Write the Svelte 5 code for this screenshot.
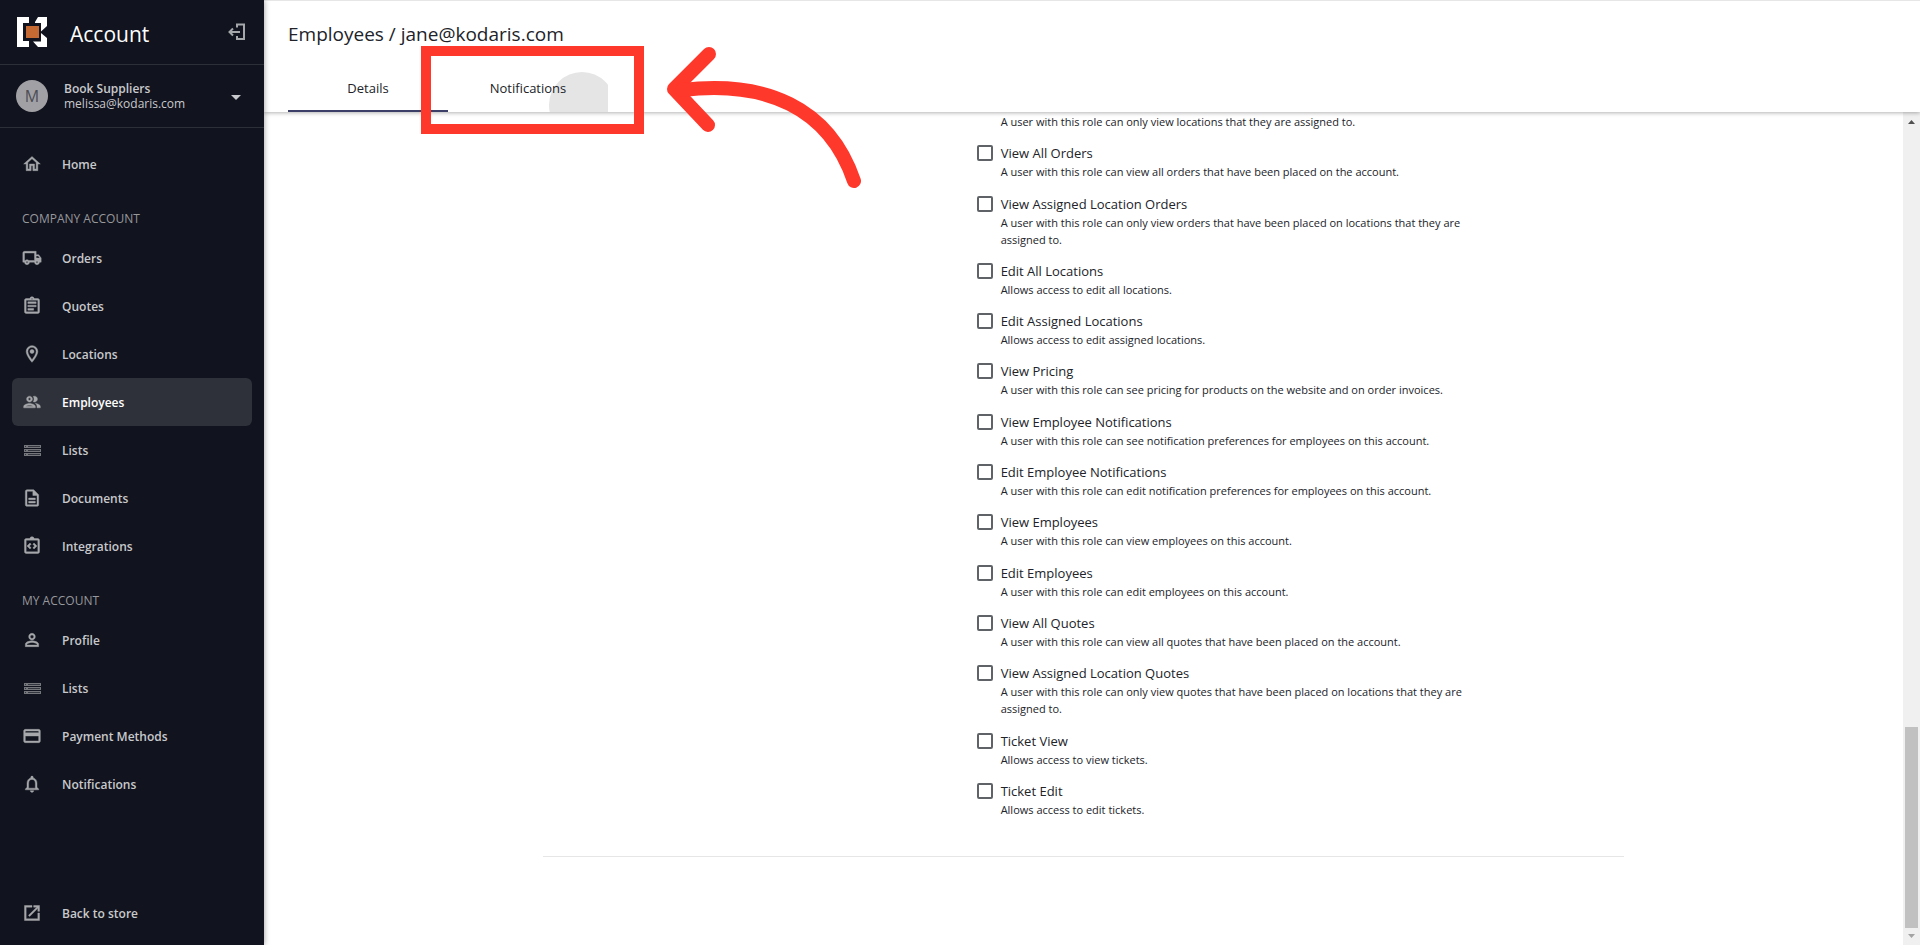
<script>
  const icons = {
    home: 'M12 5.69l5 4.5V18h-2v-6H9v6H7v-7.81l5-4.5M12 3L2 12h3v8h6v-6h2v6h6v-8h3L12 3z',
    truck:
      'M20 8h-3V4H3c-1.1 0-2 .9-2 2v11h2c0 1.66 1.34 3 3 3s3-1.34 3-3h6c0 1.66 1.34 3 3 3s3-1.34 3-3h2v-5l-3-4zm-.5 1.5l1.96 2.5H17V9.5h2.5zM6 18c-.55 0-1-.45-1-1s.45-1 1-1 1 .45 1 1-.45 1-1 1zm2.22-3c-.55-.61-1.33-1-2.22-1s-1.67.39-2.22 1H3V6h12v9H8.22zM18 18c-.55 0-1-.45-1-1s.45-1 1-1 1 .45 1 1-.45 1-1 1z',
    clipboard:
      'M7 15h7v2H7zm0-4h10v2H7zm0-4h10v2H7zm12-4h-4.18C14.4 1.84 13.3 1 12 1c-1.3 0-2.4.84-2.82 2H5c-1.1 0-2 .9-2 2v14c0 1.1.9 2 2 2h14c1.1 0 2-.9 2-2V5c0-1.1-.9-2-2-2zm-7-.25c.41 0 .75.34.75.75s-.34.75-.75.75-.75-.34-.75-.75.34-.75.75-.75zM19 19H5V5h14v14z',
    pin: 'M12 2C8.13 2 5 5.13 5 9c0 5.25 7 13 7 13s7-7.75 7-13c0-3.87-3.13-7-7-7zM7 9c0-2.76 2.24-5 5-5s5 2.24 5 5c0 2.88-2.88 7.19-5 9.88C9.92 16.21 7 11.85 7 9zM12 6.5a2.5 2.5 0 100 5 2.5 2.5 0 000-5z',
    people:
      'M9 13.75c-2.34 0-7 1.17-7 3.5V19h14v-1.75c0-2.33-4.66-3.5-7-3.5zM4.34 17c.84-.58 2.87-1.25 4.66-1.25s3.82.67 4.66 1.25H4.34zM9 12c1.93 0 3.5-1.57 3.5-3.5S10.93 5 9 5 5.5 6.57 5.5 8.5 7.07 12 9 12zm0-5c.83 0 1.5.67 1.5 1.5S9.83 10 9 10s-1.5-.67-1.5-1.5S8.17 7 9 7zm7.04 6.81c1.16.84 1.96 1.96 1.96 3.44V19h4v-1.75c0-2.02-3.5-3.17-5.96-3.44zM15 12c1.93 0 3.5-1.57 3.5-3.5S16.93 5 15 5c-.54 0-1.04.13-1.5.35.63.89 1 1.98 1 3.15s-.37 2.26-1 3.15c.46.22.96.35 1.5.35z',
    doc: 'M8 16h8v2H8zm0-4h8v2H8zm6-10H6c-1.1 0-2 .9-2 2v16c0 1.1.89 2 1.99 2H18c1.1 0 2-.9 2-2V8l-6-6zm4 18H6V4h7v5h5v11z',
    code: 'M19 3h-4.18C14.4 1.84 13.3 1 12 1s-2.4.84-2.82 2H5c-1.1 0-2 .9-2 2v14c0 1.1.9 2 2 2h14c1.1 0 2-.9 2-2V5c0-1.1-.9-2-2-2zm0 16H5V5h14v14zM11 14.17L8.83 12 11 9.83 9.59 8.41 6 12l3.59 3.59zM14.41 15.59L18 12l-3.59-3.59L13 9.83 15.17 12 13 14.17z',
    person:
      'M12 5.9c1.16 0 2.1.94 2.1 2.1s-.94 2.1-2.1 2.1S9.9 9.16 9.9 8s.94-2.1 2.1-2.1m0 9c2.97 0 6.1 1.46 6.1 2.1v1.1H5.9V17c0-.64 3.13-2.1 6.1-2.1M12 4C9.79 4 8 5.79 8 8s1.79 4 4 4 4-1.79 4-4-1.79-4-4-4zm0 9c-2.67 0-8 1.34-8 4v3h16v-3c0-2.66-5.33-4-8-4z',
    card: 'M20 4H4c-1.11 0-1.99.89-1.99 2L2 18c0 1.11.89 2 2 2h16c1.11 0 2-.89 2-2V6c0-1.11-.89-2-2-2zm0 14H4v-6h16v6zm0-10H4V6h16v2z',
    bell: 'M12 22c1.1 0 2-.9 2-2h-4c0 1.1.9 2 2 2zm6-6v-5c0-3.07-1.63-5.64-4.5-6.32V4c0-.83-.67-1.5-1.5-1.5s-1.5.67-1.5 1.5v.68C7.64 5.36 6 7.92 6 11v5l-2 2v1h16v-1l-2-2zm-2 1H8v-6c0-2.48 1.51-4.5 4-4.5s4 2.02 4 4.5v6z',
    open: 'M19 19H5V5h7V3H3v18h18v-9h-2v7zM14 3v2h3.59l-9.83 9.83 1.41 1.41L19 6.41V10h2V3h-7z'
  };

  const company = [
    ['Orders', 'truck'],
    ['Quotes', 'clipboard'],
    ['Locations', 'pin'],
    ['Employees', 'people'],
    ['Lists', 'lists'],
    ['Documents', 'doc'],
    ['Integrations', 'code']
  ];
  const personal = [
    ['Profile', 'person'],
    ['Lists', 'lists'],
    ['Payment Methods', 'card'],
    ['Notifications', 'bell']
  ];

  const roles = [
    ['View All Orders', 'A user with this role can view all orders that have been placed on the account.'],
    ['View Assigned Location Orders', 'A user with this role can only view orders that have been placed on locations that they are assigned to.'],
    ['Edit All Locations', 'Allows access to edit all locations.'],
    ['Edit Assigned Locations', 'Allows access to edit assigned locations.'],
    ['View Pricing', 'A user with this role can see pricing for products on the website and on order invoices.'],
    ['View Employee Notifications', 'A user with this role can see notification preferences for employees on this account.'],
    ['Edit Employee Notifications', 'A user with this role can edit notification preferences for employees on this account.'],
    ['View Employees', 'A user with this role can view employees on this account.'],
    ['Edit Employees', 'A user with this role can edit employees on this account.'],
    ['View All Quotes', 'A user with this role can view all quotes that have been placed on the account.'],
    ['View Assigned Location Quotes', 'A user with this role can only view quotes that have been placed on locations that they are assigned to.'],
    ['Ticket View', 'Allows access to view tickets.'],
    ['Ticket Edit', 'Allows access to edit tickets.']
  ];
</script>

{#snippet navItem(label, icon)}
  <a class="item" class:active={label === 'Employees'} href="#{icon}">
    {#if icon === 'lists'}
      <svg class="thin" viewBox="0 0 20 20" aria-hidden="true">
        {#each [5, 9, 13] as y}
          <path fill="#74767c" d="M2 {y}h17v3H2z" />
          <path fill="#34363f" d="M3 {y + 1}h1v1H3zM6 {y + 1}h12v1H6z" />
        {/each}
      </svg>
    {:else}
      <svg viewBox="0 0 24 24" aria-hidden="true"><path d={icons[icon]} /></svg>
    {/if}
    <span>{label}</span>
  </a>
{/snippet}

<div class="app">
  <aside>
    <div class="brand">
      <svg class="logo" viewBox="0 0 30 30" aria-hidden="true">
        <path fill="#fff" d="M0 0h12v6H6v18h6v6H0zM21 0h9v9l-6 5.500V6h-6v-1zM24 16l6 5v9h-9l-5-5.500h8z" />
        <path fill="#c66a33" d="M9 9h13v12H9z" />
      </svg>
      <h1>Account</h1>
      <button class="plain exit" aria-label="Collapse">
        <svg viewBox="0 0 18 18" aria-hidden="true">
          <path fill="none" stroke="currentColor" stroke-width="2" d="M9 4.500V1.500h7V16H9v-3" />
          <path fill="none" stroke="currentColor" stroke-width="2" d="M1.500 9H12M5 5.500L1.500 9L5 12.500" />
        </svg>
      </button>
    </div>
    <button class="plain user">
      <span class="avatar">M</span>
      <span class="who"><b>Book Suppliers</b><span>melissa@kodaris.com</span></span>
      <svg class="caret" viewBox="0 0 10 7" aria-hidden="true"><path d="M0 2h10L5 7z" /></svg>
    </button>
    <nav>
      {@render navItem('Home', 'home')}
      <h2>COMPANY ACCOUNT</h2>
      {#each company as [label, icon]}
        {@render navItem(label, icon)}
      {/each}
      <h2>MY ACCOUNT</h2>
      {#each personal as [label, icon]}
        {@render navItem(label, icon)}
      {/each}
      <div class="spacer"></div>
      {@render navItem('Back to store', 'open')}
    </nav>
  </aside>

  <main>
    <header>
      <div class="crumb">Employees / jane@kodaris.com</div>
      <div class="tabs" role="tablist">
        <button class="plain tab selected" role="tab" aria-selected="true">Details</button>
        <button class="plain tab" role="tab" aria-selected="false"><i class="ripple"></i><span>Notifications</span></button>
      </div>
    </header>
    <div class="body">
      <section>
        <div class="list">
          <p class="desc">A user with this role can only view locations that they are assigned to.</p>
          {#each roles as [name, text], i}
            <div class="role">
              <input type="checkbox" id="role-{i}" aria-describedby="desc-{i}" />
              <label for="role-{i}">{name}</label>
              <p class="desc" id="desc-{i}">{text}</p>
            </div>
          {/each}
        </div>
        <hr />
      </section>
      <div class="scrollbar" aria-hidden="true">
        <svg viewBox="0 0 17 17"><path fill="#505050" d="M5 12h7L8.500 8z" /></svg>
        <div class="thumb"></div>
        <svg viewBox="0 0 17 17"><path fill="#a3a3a3" d="M5 6h7L8.500 10z" /></svg>
      </div>
    </div>
  </main>

  <svg class="callout" viewBox="0 0 445 150" aria-hidden="true">
    <g fill="none" stroke="#ff382c">
      <path stroke-width="10" d="M6 11h213v78H6z" />
      <g stroke-width="14" stroke-linecap="round" stroke-linejoin="round">
        <path d="M289 14L254 49L288 85" />
        <path d="M262 50C345 40 409 67 434 141" />
      </g>
    </g>
  </svg>
</div>

<style>
  :global(body) {
    margin: 0;
    background: #fff;
  }
  .app {
    position: relative;
    display: flex;
    height: 100vh;
    overflow: hidden;
    font-family: 'Open Sans', 'Noto Sans', sans-serif;
    font-size: 13px;
    color: #212329;
  }
  h1,
  h2,
  p {
    margin: 0;
    font-weight: 400;
  }
  .plain {
    padding: 0;
    border: 0;
    background: none;
    font: inherit;
    color: inherit;
    cursor: pointer;
  }
  aside {
    z-index: 2;
    display: flex;
    flex-direction: column;
    flex: 0 0 264px;
    background: #11131e;
    color: #c8c9cc;
    box-shadow: 0 0 6px rgba(0, 0, 0, 0.4);
  }
  .brand {
    display: flex;
    align-items: center;
    height: 64px;
    padding: 0 18px 0 17px;
    border-bottom: 1px solid #2c2e38;
  }
  .logo {
    width: 30px;
    height: 30px;
  }
  h1 {
    flex: 1;
    padding: 3px 0 0 23px;
    font-size: 21px;
    line-height: 28px;
    color: #fff;
  }
  .exit {
    width: 18px;
    height: 18px;
    color: #a6a7ab;
  }
  .exit svg {
    display: block;
  }
  .plain.user {
    display: flex;
    align-items: center;
    height: 63px;
    padding: 0 23px 0 16px;
    border-bottom: 1px solid #2c2e38;
    text-align: left;
  }
  .avatar {
    width: 32px;
    border-radius: 50%;
    background: #a1a1a5;
    font-size: 16px;
    line-height: 32px;
    text-align: center;
    color: #4c4d55;
  }
  .who {
    flex: 1;
    padding-left: 16px;
    font-size: 12px;
    line-height: 15px;
  }
  .who b,
  .who span {
    display: block;
  }
  b {
    font-weight: 600;
  }
  .caret {
    width: 10px;
    height: 7px;
    fill: #c8c9cc;
  }
  nav {
    display: flex;
    flex: 1;
    flex-direction: column;
    padding: 12px 12px 8px;
  }
  .item {
    display: flex;
    align-items: center;
    gap: 20px;
    height: 48px;
    padding: 0 10px;
    border-radius: 6px;
    font-size: 12px;
    font-weight: 600;
    color: #c8c9cc;
    text-decoration: none;
  }
  .item svg {
    width: 20px;
    height: 20px;
    fill: #a6a7ab;
    stroke: #a6a7ab;
    stroke-width: 0.5;
  }
  .item .thin {
    stroke: none;
  }
  .active {
    background: #2f313a;
    color: #fff;
  }
  h2 {
    padding: 23px 10px 7px;
    font-size: 12px;
    line-height: 16px;
    color: #97989c;
  }
  .spacer {
    flex: 1;
  }
  main {
    display: flex;
    flex: 1;
    flex-direction: column;
    min-width: 0;
  }
  header {
    z-index: 1;
    padding-left: 24px;
    border-top: 1px solid #e6e6e6;
    background: #fff;
    box-shadow: 0 1px 4px rgba(0, 0, 0, 0.3);
  }
  .crumb {
    padding: 19px 0 16px;
    font-size: 19px;
    line-height: 28px;
  }
  .tabs {
    display: flex;
  }
  .tab {
    position: relative;
    width: 160px;
    height: 48px;
    overflow: hidden;
  }
  .selected {
    box-shadow: inset 0 -2px #3c4068;
  }
  .tab span {
    position: relative;
  }
  .ripple {
    position: absolute;
    top: 8px;
    left: 101px;
    width: 66px;
    height: 66px;
    border-radius: 50%;
    background: #e5e5e5;
  }
  .body {
    display: flex;
    flex: 1;
    min-height: 0;
  }
  section {
    display: flex;
    flex: 1;
    flex-direction: column;
    align-items: center;
    padding-bottom: 88px;
  }
  .list {
    box-sizing: border-box;
    display: flex;
    flex: 1;
    flex-direction: column;
    justify-content: space-between;
    width: 66%;
    padding: 1px 8% 38px 434px;
  }
  .list > .desc {
    padding-left: 24px;
  }
  .role {
    display: grid;
    grid-template-columns: 16px 1fr;
    column-gap: 8px;
    align-items: center;
  }
  input {
    width: 16px;
    height: 16px;
    margin: 0;
    appearance: none;
    border: 2px solid #5f6368;
    border-radius: 2px;
  }
  input:checked {
    background: #3c4068;
  }
  label {
    line-height: 20px;
  }
  .desc {
    grid-column: 2;
    font-size: 11px;
    line-height: 17px;
  }
  hr {
    width: 66%;
    height: 1px;
    margin: 0;
    border: 0;
    background: #e6e6e6;
  }
  .scrollbar {
    display: flex;
    flex: 0 0 17px;
    flex-direction: column;
    background: #f0f0f0;
  }
  .thumb {
    height: 201px;
    margin: auto 2px 0;
    background: #c1c1c1;
  }
  .callout {
    position: absolute;
    z-index: 3;
    top: 40px;
    left: 420px;
    width: 445px;
    height: 150px;
    pointer-events: none;
  }
</style>
